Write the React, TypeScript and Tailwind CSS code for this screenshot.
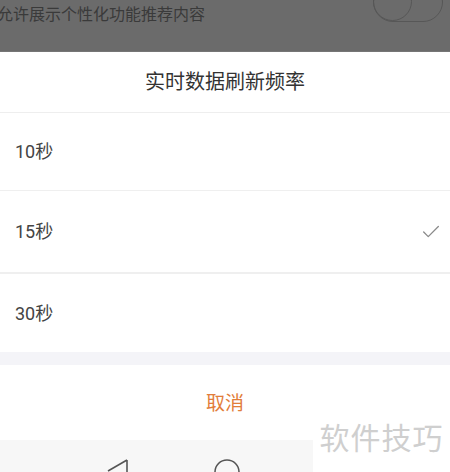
import { Check } from 'lucide-react'

const options = [
  { label: '10秒', h: 'h-[78px]', selected: false },
  { label: '15秒', h: 'h-[83px]', selected: true },
  { label: '30秒', h: 'h-[78px]', selected: false },
]

export default function App() {
  return (
    <div
      className="relative w-[450px] h-[472px] overflow-hidden bg-white flex flex-col"
      style={{ fontFamily: 'Roboto, "Noto Sans CJK SC", "Noto Sans", sans-serif' }}
    >
      {/* dimmed page behind the sheet */}
      <div className="h-[52px] shrink-0 bg-[#6b6b6b] border-b border-[#767676] flex items-start justify-between overflow-hidden">
        <span className="-ml-[3px] mt-[3px] text-[16px] leading-6 text-[#3a3a3a] whitespace-nowrap">
          允许展示个性化功能推荐内容
        </span>
        <div className="-mt-[18px] mr-[7px] w-[70px] h-[40px] shrink-0 rounded-full border-[1.5px] border-[#575757] flex">
          <div className="-ml-[1px] -mt-[1px] w-[39px] h-[39px] rounded-full border-[1.5px] border-[#575757]" />
        </div>
      </div>

      {/* bottom sheet */}
      <div className="h-[61px] shrink-0 flex items-center justify-center border-b border-[#eeeeee] text-[20px] text-[#333333]">
        实时数据刷新频率
      </div>
      {options.map((o, i) => (
        <div
          key={o.label}
          className={`${o.h} shrink-0 flex items-center justify-between pl-[15px] pr-[8px] text-[18px] text-[#444444] ${
            i === 0 ? 'border-b border-[#efefef]' : ''
          } ${i === 1 ? 'border-b-2 border-[#efefef]' : ''}`}
        >
          <span>{o.label}</span>
          {o.selected && <Check size={22} strokeWidth={1.4} className="text-[#8a8a8a]" />}
        </div>
      ))}
      <div className="h-[13px] shrink-0 bg-[#f4f4f8]" />
      <div className="h-[75px] shrink-0 flex items-center justify-center pt-[4px] text-[19px] text-[#e27d3a]">取消</div>

      {/* system nav bar */}
      <div className="flex-1 bg-[#f7f7f7] flex items-start pl-[107px] pt-[19px] gap-[85px]">
        <svg width="22" height="14" viewBox="0 0 22 14" fill="none">
          <path d="M20 1 L1 12 M20 1 L20 16" stroke="#555" strokeWidth="1.6" strokeLinejoin="round" />
        </svg>
        <svg width="26" height="14" viewBox="0 0 26 14" fill="none">
          <circle cx="13" cy="13" r="12" stroke="#555" strokeWidth="1.6" />
        </svg>
      </div>

      {/* watermark */}
      <div className="absolute right-0 bottom-0 w-[137px] h-[58px] bg-white flex items-start justify-center pt-[2px] text-[30px] text-[#cfcfcf] tracking-[1px]">
        软件技巧
      </div>
    </div>
  )
}
